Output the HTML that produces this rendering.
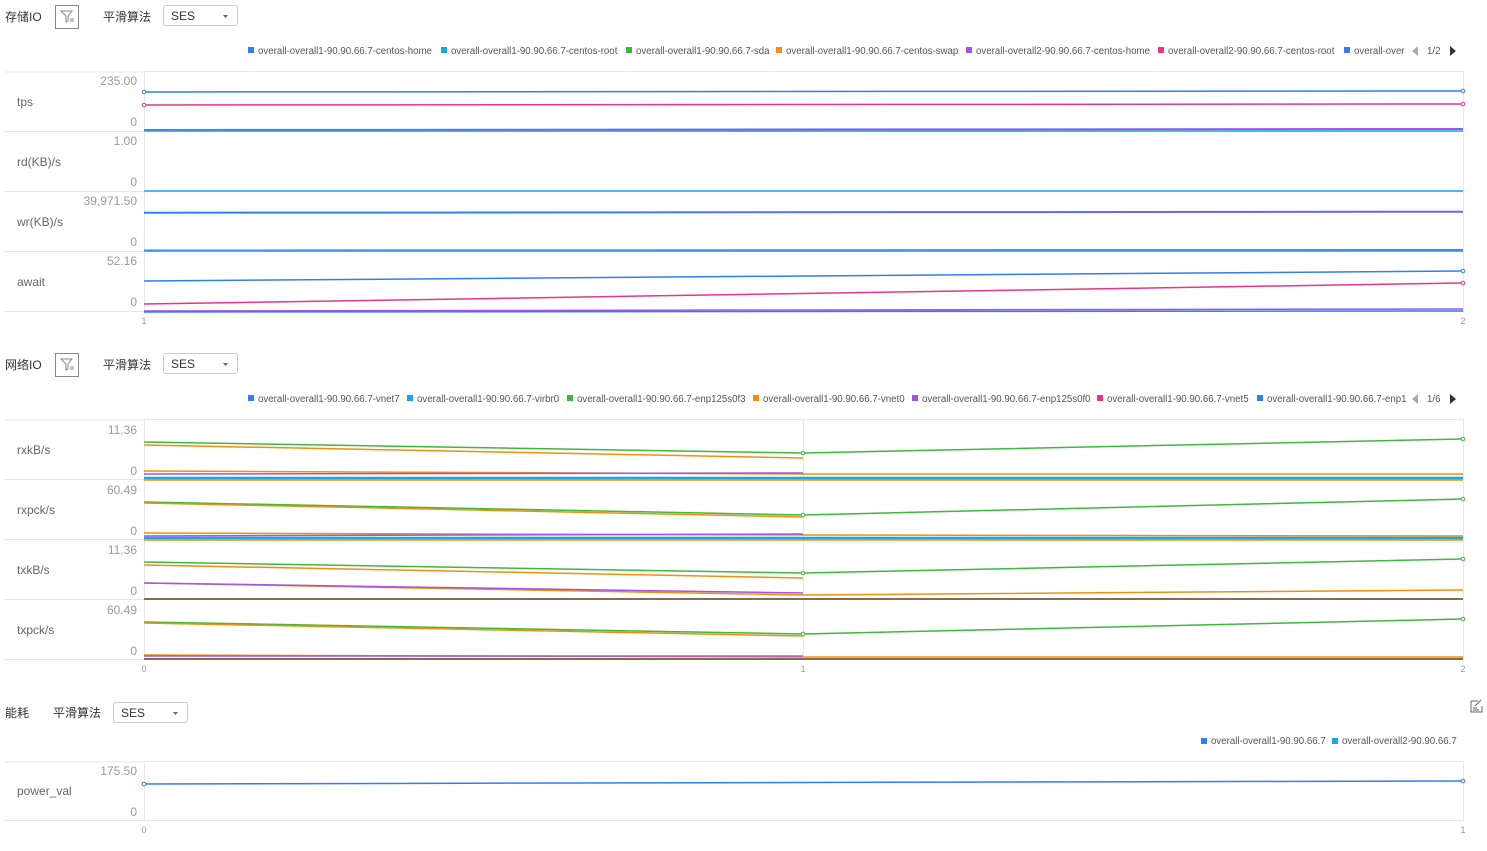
<!DOCTYPE html>
<html><head><meta charset="utf-8"><style>
body{margin:0;background:#fff;width:1487px;height:846px;overflow:hidden}
text{font-family:"Liberation Sans","Noto Sans CJK SC",sans-serif}
.t{font-size:12px;fill:#333}
.lab{font-size:12px;fill:#666}
.ax{font-size:12px;fill:#999;text-anchor:end}
.lg{font-size:9.7px;fill:#555}
.xl{font-size:9px;fill:#999;text-anchor:middle}
.sel{fill:#fff;stroke:#ccc}
</style></head><body>
<svg width="1487" height="846" xmlns="http://www.w3.org/2000/svg" fill="none">
<text x="5" y="21" class="t">存储IO</text>
<rect x="55.5" y="5.5" width="23" height="23" stroke="#888" fill="#fff"/>
<path d="M61 11h11l-4 5v5l-2 1v-6z" stroke="#888" stroke-width="1"/><path d="M70 19h4M70 21h4" stroke="#888"/>
<text x="103" y="21" class="t">平滑算法</text>
<rect x="163.5" y="5.5" width="74" height="20" rx="2" class="sel"/>
<text x="171" y="20" class="t">SES</text><path d="M223 15h5l-2.5 3z" fill="#666"/>
<g class="lg">
<rect x="248" y="47" width="6" height="6" fill="#2f7ef5"/><text x="258" y="54">overall-overall1-90.90.66.7-centos-home</text>
<rect x="441" y="47" width="6" height="6" fill="#14a9e8"/><text x="451" y="54">overall-overall1-90.90.66.7-centos-root</text>
<rect x="626" y="47" width="6" height="6" fill="#3cb93c"/><text x="636" y="54">overall-overall1-90.90.66.7-sda</text>
<rect x="776" y="47" width="6" height="6" fill="#f0900a"/><text x="786" y="54">overall-overall1-90.90.66.7-centos-swap</text>
<rect x="966" y="47" width="6" height="6" fill="#a552e8"/><text x="976" y="54">overall-overall2-90.90.66.7-centos-home</text>
<rect x="1158" y="47" width="6" height="6" fill="#e8348a"/><text x="1168" y="54">overall-overall2-90.90.66.7-centos-root</text>
<rect x="1344" y="47" width="6" height="6" fill="#2f7ef5"/><text x="1354" y="54">overall-over</text>
<path d="M1418 46v10l-6-5z" fill="#aaa"/><text x="1427" y="54">1/2</text><path d="M1450 46v10l6-5z" fill="#333"/>
</g>
<g stroke="#e4e7f2">
<rect x="144.5" y="71.5" width="1319" height="240"/>
<path d="M5 72h139M5 131.5h1459M5 191.5h1459M5 251.5h1459M5 311.5h139"/>
</g>
<g class="lab"><text x="17" y="106">tps</text><text x="17" y="166">rd(KB)/s</text><text x="17" y="226">wr(KB)/s</text><text x="17" y="286">await</text></g>
<g class="ax"><text x="137" y="85">235.00</text><text x="137" y="126">0</text><text x="137" y="145">1.00</text><text x="137" y="186">0</text><text x="137" y="205">39,971.50</text><text x="137" y="246">0</text><text x="137" y="265">52.16</text><text x="137" y="306">0</text></g>
<g stroke-width="1.5">
<path d="M144 92L1463 91" stroke="#2f7ef5"/><path d="M144 105L1463 104" stroke="#e8348a"/>
<path d="M144 130L1463 129" stroke="#a552e8" stroke-width="2"/><path d="M144 131L1463 131" stroke="#14a9e8"/>
<path d="M144 191L1463 191" stroke="#14a9e8"/>
<path d="M144 213L1463 212" stroke="#a552e8"/><path d="M144 212.5L1463 211.5" stroke="#2f7ef5" stroke-width="1.5"/>
<path d="M144 250.5L1463 250" stroke="#a552e8" stroke-width="2"/><path d="M144 251L1463 251" stroke="#14a9e8"/>
<path d="M144 281L1463 271" stroke="#2f7ef5"/><path d="M144 304L1463 283" stroke="#e8348a"/>
<path d="M144 311L1463 309" stroke="#a552e8"/><path d="M144 312L1463 311" stroke="#2f7ef5"/>
</g>
<text x="144" y="324" class="xl">1</text><text x="1463" y="324" class="xl">2</text>

<text x="5" y="369" class="t">网络IO</text>
<rect x="55.5" y="353.5" width="23" height="23" stroke="#888" fill="#fff"/>
<path d="M61 359h11l-4 5v5l-2 1v-6z" stroke="#888"/><path d="M70 367h4M70 369h4" stroke="#888"/>
<text x="103" y="369" class="t">平滑算法</text>
<rect x="163.5" y="353.5" width="74" height="20" rx="2" class="sel"/>
<text x="171" y="368" class="t">SES</text><path d="M223 363h5l-2.5 3z" fill="#666"/>
<g class="lg">
<rect x="248" y="395" width="6" height="6" fill="#2f7ef5"/><text x="258" y="402">overall-overall1-90.90.66.7-vnet7</text>
<rect x="407" y="395" width="6" height="6" fill="#14a9e8"/><text x="417" y="402">overall-overall1-90.90.66.7-virbr0</text>
<rect x="567" y="395" width="6" height="6" fill="#3cb93c"/><text x="577" y="402">overall-overall1-90.90.66.7-enp125s0f3</text>
<rect x="753" y="395" width="6" height="6" fill="#f0900a"/><text x="763" y="402">overall-overall1-90.90.66.7-vnet0</text>
<rect x="912" y="395" width="6" height="6" fill="#a552e8"/><text x="922" y="402">overall-overall1-90.90.66.7-enp125s0f0</text>
<rect x="1097" y="395" width="6" height="6" fill="#e8348a"/><text x="1107" y="402">overall-overall1-90.90.66.7-vnet5</text>
<rect x="1257" y="395" width="6" height="6" fill="#2f7ef5"/><text x="1267" y="402">overall-overall1-90.90.66.7-enp1</text>
<path d="M1418 394v10l-6-5z" fill="#aaa"/><text x="1427" y="402">1/6</text><path d="M1450 394v10l6-5z" fill="#333"/>
</g>
<g stroke="#e4e7f2">
<rect x="144.5" y="419.5" width="1319" height="240"/><path d="M803.5 420v240"/>
<path d="M5 420h139M5 479.5h1459M5 539.5h1459M5 599.5h1459M5 659.5h139"/>
</g>
<g class="lab"><text x="17" y="454">rxkB/s</text><text x="17" y="514">rxpck/s</text><text x="17" y="574">txkB/s</text><text x="17" y="634">txpck/s</text></g>
<g class="ax"><text x="137" y="434">11.36</text><text x="137" y="475">0</text><text x="137" y="494">60.49</text><text x="137" y="535">0</text><text x="137" y="554">11.36</text><text x="137" y="595">0</text><text x="137" y="614">60.49</text><text x="137" y="655">0</text></g>
<g stroke-width="1.5">
<path d="M144 442L803 453L1463 439" stroke="#3cb93c"/><path d="M144 445L803 458" stroke="#f0900a"/>
<path d="M144 471L803 474L1463 474" stroke="#f0900a"/><path d="M144 474L803 473" stroke="#a552e8"/>
<path d="M144 478L1463 478" stroke="#14a9e8" stroke-width="2.5"/><path d="M144 480L1463 480" stroke="#f0900a"/>
<path d="M144 502L803 515L1463 499" stroke="#3cb93c"/><path d="M144 503L803 517" stroke="#f0900a"/>
<path d="M144 533L803 535L1463 536" stroke="#f0900a"/><path d="M144 536L803 534" stroke="#a552e8"/>
<path d="M144 538L1463 538" stroke="#14a9e8" stroke-width="2.5"/><path d="M144 540L1463 540" stroke="#f0900a"/>
<path d="M144 562L803 573L1463 559" stroke="#3cb93c"/><path d="M144 565L803 578" stroke="#f0900a"/>
<path d="M144 583L803 595L1463 590" stroke="#f0900a"/><path d="M144 583L803 593" stroke="#a552e8"/>
<path d="M144 599L1463 599" stroke="#8a6a4a" stroke-width="2"/>
<path d="M144 622L803 634L1463 619" stroke="#3cb93c"/><path d="M144 623L803 636" stroke="#f0900a"/>
<path d="M144 655L803 657L1463 657" stroke="#f0900a"/><path d="M144 656L803 656" stroke="#a552e8"/>
<path d="M144 659L1463 659" stroke="#8a6a4a" stroke-width="2"/>
</g>
<text x="144" y="672" class="xl">0</text><text x="803" y="672" class="xl">1</text><text x="1463" y="672" class="xl">2</text>

<text x="5" y="717" class="t">能耗</text>
<text x="53" y="717" class="t">平滑算法</text>
<rect x="113.5" y="702.5" width="74" height="20" rx="2" class="sel"/>
<text x="121" y="717" class="t">SES</text><path d="M173 712h5l-2.5 3z" fill="#666"/>
<path d="M1471 701h7M1471 701v11h11v-6M1481 700l-6 6" stroke="#666"/><path d="M1473 708h4M1473 710h6" stroke="#666"/>
<g class="lg">
<rect x="1201" y="738" width="6" height="6" fill="#2f7ef5"/><text x="1211" y="744">overall-overall1-90.90.66.7</text>
<rect x="1332" y="738" width="6" height="6" fill="#14a9e8"/><text x="1342" y="744">overall-overall2-90.90.66.7</text>
</g>
<g stroke="#e4e7f2"><rect x="144.5" y="761.5" width="1319" height="59"/><path d="M5 762h139M5 820.5h139"/></g>
<text x="17" y="795" class="lab">power_val</text>
<g class="ax"><text x="137" y="775">175.50</text><text x="137" y="816">0</text></g>
<path d="M144 784L1463 781" stroke="#2f7ef5" stroke-width="1.5"/>
<text x="144" y="833" class="xl">0</text><text x="1463" y="833" class="xl">1</text>
<g fill="#fff" stroke-width="1">
<circle cx="144" cy="92" r="1.8" stroke="#2f7ef5"/><circle cx="1463" cy="91" r="1.8" stroke="#2f7ef5"/>
<circle cx="144" cy="105" r="1.8" stroke="#e8348a"/><circle cx="1463" cy="104" r="1.8" stroke="#e8348a"/>
<circle cx="1463" cy="271" r="1.8" stroke="#2f7ef5"/><circle cx="1463" cy="283" r="1.8" stroke="#e8348a"/>
<circle cx="144" cy="784" r="1.8" stroke="#2f7ef5"/><circle cx="1463" cy="781" r="1.8" stroke="#2f7ef5"/>
<circle cx="803" cy="453" r="1.8" stroke="#3cb93c"/><circle cx="1463" cy="439" r="1.8" stroke="#3cb93c"/>
<circle cx="803" cy="515" r="1.8" stroke="#3cb93c"/><circle cx="1463" cy="499" r="1.8" stroke="#3cb93c"/>
<circle cx="803" cy="573" r="1.8" stroke="#3cb93c"/><circle cx="1463" cy="559" r="1.8" stroke="#3cb93c"/>
<circle cx="803" cy="634" r="1.8" stroke="#3cb93c"/><circle cx="1463" cy="619" r="1.8" stroke="#3cb93c"/>
</g>
</svg>
</body></html>
